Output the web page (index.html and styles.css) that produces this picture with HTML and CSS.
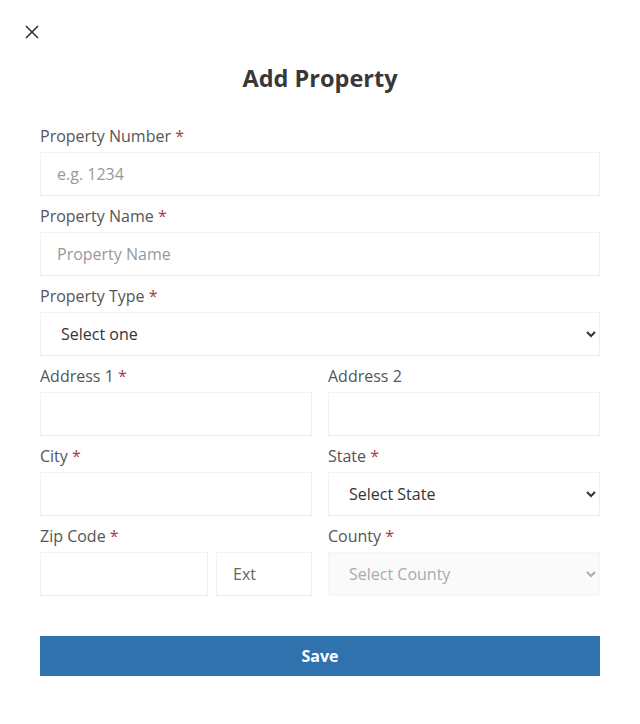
FILE: index.html
```html
<!DOCTYPE html>
<html>
<head>
<meta charset="utf-8">
<link rel="stylesheet" href="styles.css">
</head>
<body>
<div class="modal">
  <button class="close" aria-label="Close">
    <svg width="14" height="14" viewBox="0 0 14 14"><path d="M1 1L13 13M13 1L1 13" stroke="#333" stroke-width="1.6" fill="none"/></svg>
  </button>
  <h1 class="title">Add Property</h1>
  <form class="form">
    <div class="field">
      <label class="label">Property Number <span class="req">*</span></label>
      <input class="control" type="text" placeholder="e.g. 1234">
    </div>
    <div class="field">
      <label class="label">Property Name <span class="req">*</span></label>
      <input class="control" type="text" placeholder="Property Name">
    </div>
    <div class="field">
      <label class="label">Property Type <span class="req">*</span></label>
      <select class="control select"><option>Select one</option></select>
    </div>
    <div class="row">
      <div class="field">
        <label class="label">Address 1 <span class="req">*</span></label>
        <input class="control" type="text">
      </div>
      <div class="field">
        <label class="label">Address 2</label>
        <input class="control" type="text">
      </div>
    </div>
    <div class="row">
      <div class="field">
        <label class="label">City <span class="req">*</span></label>
        <input class="control" type="text">
      </div>
      <div class="field">
        <label class="label">State <span class="req">*</span></label>
        <select class="control select"><option>Select State</option></select>
      </div>
    </div>
    <div class="row">
      <div class="field">
        <label class="label">Zip Code <span class="req">*</span></label>
        <div class="zip">
          <input class="control" type="text">
          <input class="control ext" type="text" placeholder="Ext">
        </div>
      </div>
      <div class="field">
        <label class="label">County <span class="req">*</span></label>
        <select class="control select" disabled><option>Select County</option></select>
      </div>
    </div>
    <button type="button" class="save">Save</button>
  </form>
</div>
</body>
</html>
```
FILE: styles.css
```css
* { box-sizing: border-box; }
html, body { margin: 0; padding: 0; background: #fff; }
body { font-family: "Open Sans", "Liberation Sans", sans-serif; color: #555; }
.modal { width: 640px; padding: 24px 40px 40px; position: relative; }
.close {
  position: absolute; left: 25px; top: 25px;
  width: 14px; height: 14px; padding: 0; border: 0; background: none; display: block;
}
.close svg { display: block; }
.title {
  margin: 38px 0 0; text-align: center; font-size: 23.5px; line-height: 32px;
  font-weight: 700; color: #383838;
}
.form { margin-top: 30px; display: flex; flex-direction: column; }
.field { display: flex; flex-direction: column; margin-bottom: 8px; min-width: 0; }
.label { font-size: 16px; line-height: 24px; margin-bottom: 4px; color: #555; }
.req { color: #a33b3b; }
.control {
  height: 44px; width: 100%; border: 1px solid #f2f2f2; border-bottom-color: #eaeaea;
  border-right-color: #eeeeee; border-radius: 0;
  padding: 0 16px; font-family: inherit; font-size: 16px; color: #333; background: #fff;
  outline: none;
}
.control::placeholder { color: #999; }
.ext::placeholder { color: #666; }
.select { padding: 0 12px 0 16px; }
.select:disabled { background: #fafafa; color: #aaa; border-color: #f5f5f5; opacity: 1; }
.row { display: grid; grid-template-columns: 1fr 1fr; column-gap: 16px; }
.zip { display: grid; grid-template-columns: 168px 1fr; column-gap: 8px; }
.save {
  margin-top: 32px; height: 40px; width: 100%; border: 0; background: #2f72ad;
  color: #fff; font-family: inherit; font-size: 16px; font-weight: 700;
}
```
